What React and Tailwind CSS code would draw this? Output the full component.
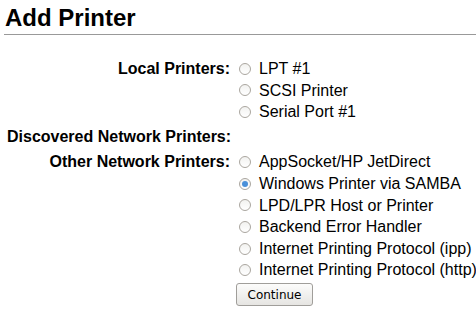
const groups = [
  { label: "Local Printers:", options: ["LPT #1", "SCSI Printer", "Serial Port #1"] },
  { label: "Discovered Network Printers:", options: [] },
  {
    label: "Other Network Printers:",
    options: [
      "AppSocket/HP JetDirect",
      "Windows Printer via SAMBA",
      "LPD/LPR Host or Printer",
      "Backend Error Handler",
      "Internet Printing Protocol (ipp)",
      "Internet Printing Protocol (http)",
    ],
  },
]

function Radio({ checked }) {
  return (
    <span className="w-[12px] h-[12px] rounded-full border border-[#aaa69f] bg-gradient-to-b from-[#f2f2f0] to-white flex items-center justify-center shrink-0">
      {checked && <span className="w-[6px] h-[6px] rounded-full bg-[#4a90d9]" />}
    </span>
  )
}

export default function App() {
  const selected = "Windows Printer via SAMBA"
  return (
    <div className="w-[476px] h-[312px] bg-white text-black overflow-hidden font-['Liberation_Sans',Arial,sans-serif]">
      <div className="pl-[4px]">
        <h1 className="text-[24px] leading-[28px] font-bold pl-[1px] pt-[4px] pb-[2px] border-b border-[#999]">
          Add Printer
        </h1>
      </div>
      <div className="grid grid-cols-[230px_1fr] gap-x-[9px] mt-[23px] text-[16px] leading-[21.6px]">
        {groups.map(g =>
          g.options.length === 0 ? (
            <div key={g.label} className="col-span-2 font-bold pl-[7px] pb-[4px]">{g.label}</div>
          ) : (
            <div key={g.label} className="contents">
              <div className="font-bold text-right">{g.label}</div>
              <div className="flex flex-col mb-[3px]">
                {g.options.map(o => (
                  <label key={o} className="flex items-center gap-[8px] whitespace-nowrap">
                    <Radio checked={o === selected} />
                    <span>{o}</span>
                  </label>
                ))}
              </div>
            </div>
          )
        )}
        <div />
        <div className="-ml-[3px] -mt-[1px]">
          <button className="h-[23px] w-[77px] rounded-[3px] border border-[#a09e9a] bg-gradient-to-b from-[#fcfcfb] to-[#e6e5e2] text-[12px] font-['DejaVu_Sans',sans-serif] leading-none">
            Continue
          </button>
        </div>
      </div>
    </div>
  )
}
